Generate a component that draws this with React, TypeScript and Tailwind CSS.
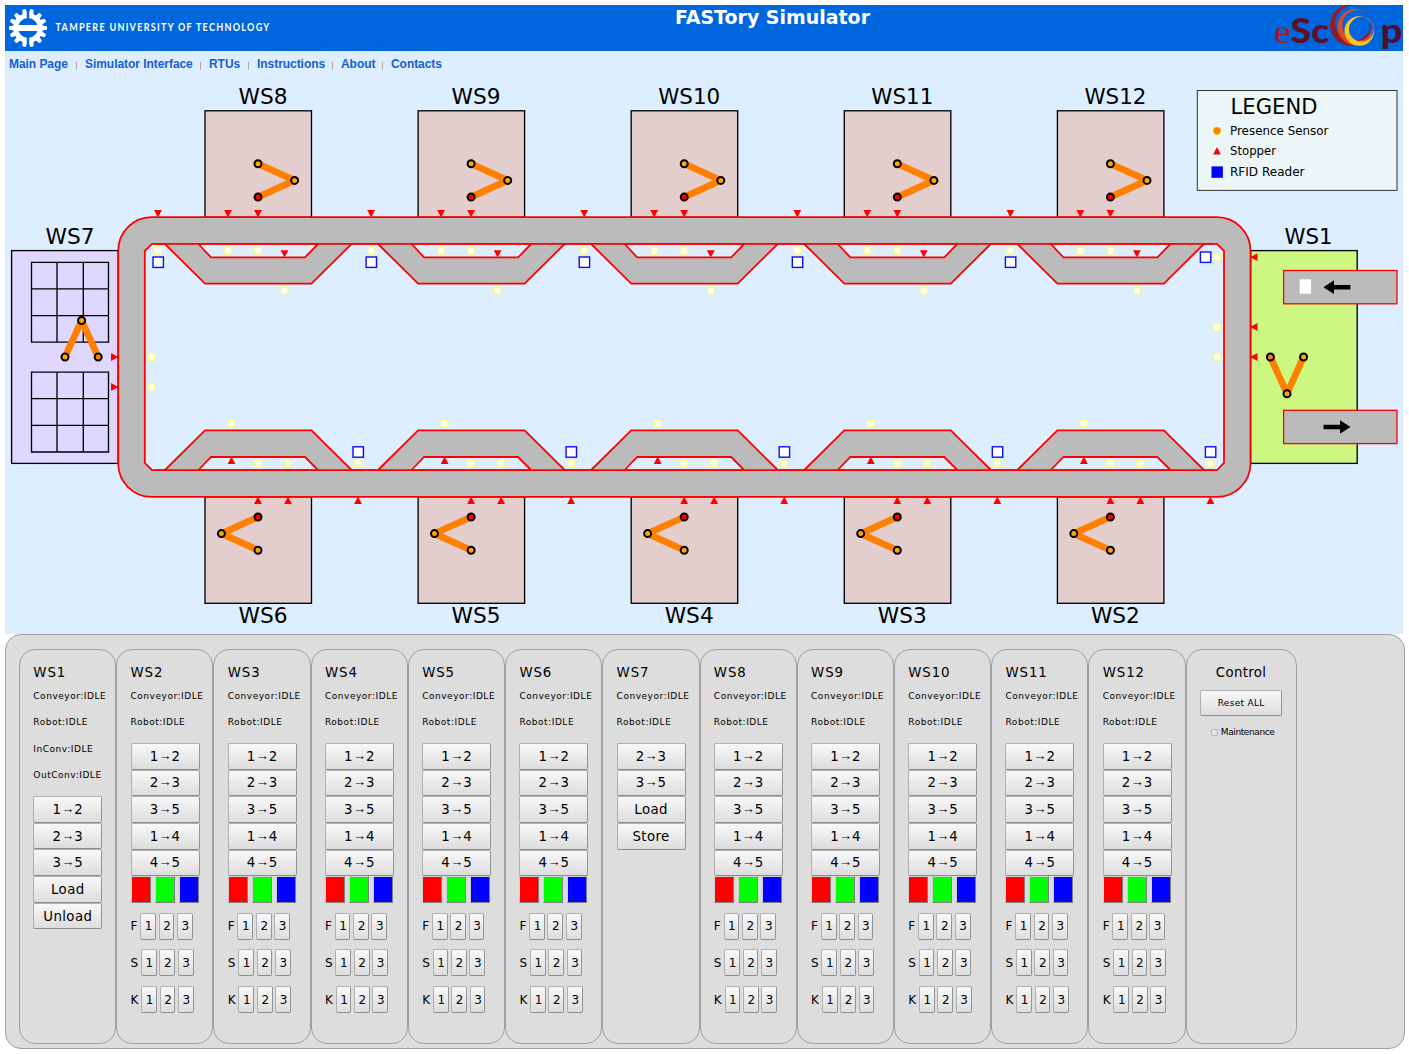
import React from "react";

const NAV = ["Main Page", "Simulator Interface", "RTUs", "Instructions", "About", "Contacts"];
const NAV_W = [60, 108, 32, 68, 34, 52];
const STEP = 213.1;

function Label({ x, y, w, size = 21.33, anchor = "middle", children }: { x: number; y: number; w: number; size?: number; anchor?: "start" | "middle"; children: string }) {
  return (
    <text x={x} y={y} fontSize={size} textAnchor={anchor} textLength={w} lengthAdjust="spacingAndGlyphs" fill="#000">
      {children}
    </text>
  );
}

function Sensor({ x, y }: { x: number; y: number }) {
  return <circle cx={x} cy={y} r="3.7" fill="#fff" stroke="#ffff66" strokeWidth="1.4" />;
}

function Reader({ x, y }: { x: number; y: number }) {
  return <rect x={x - 5} y={y - 5} width="10.4" height="10.4" fill="#fff" stroke="#0d0df5" strokeWidth="1.4" />;
}

function Stopper({ x, y, dir }: { x: number; y: number; dir: "up" | "down" | "left" | "right" }) {
  const angle = { up: 0, right: 90, down: 180, left: 270 }[dir];
  return <path d="M0 -3.9L3.9 3.5H-3.9Z" fill="#f00" transform={`translate(${x} ${y}) rotate(${angle})`} />;
}

function Robot({ points, fills }: { points: number[][]; fills: string[] }) {
  return (
    <g>
      <polyline points={points.map((p) => p.join(",")).join(" ")} fill="none" stroke="#ff8000" strokeWidth="6.7" strokeLinejoin="bevel" />
      {points.map((p, i) => (
        <circle key={i} cx={p[0]} cy={p[1]} r="3.5" fill={fills[i]} stroke="#000" strokeWidth="2" />
      ))}
    </g>
  );
}

function Grid({ y }: { y: number }) {
  return (
    <path
      d={`M31.5 ${y}H108.5V${y + 79.8}H31.5ZM57 ${y}V${y + 79.8}M83.3 ${y}V${y + 79.8}M31.5 ${y + 26.5}H108.5M31.5 ${y + 53.2}H108.5`}
      fill="none"
      stroke="#000"
      strokeWidth="1.33"
    />
  );
}

function TopStation({ i }: { i: number }) {
  return (
    <g transform={`translate(${i * STEP} 0)`}>
      <path d="M165 244L205 283.6H311.5L351.5 244H318L305 257.4H211L198 244Z" fill="#bbb" />
      <path d="M165 244L205 283.6H311.5L351.5 244M318 244L305 257.4H211L198.5 244" fill="none" stroke="#f00" strokeWidth="1.8" />
      {[158, 228, 258].map((x) => (
        <React.Fragment key={x}>
          <Stopper x={x} y={213.6} dir="down" />
          <Sensor x={x} y={250.6} />
        </React.Fragment>
      ))}
      <Stopper x={284.5} y={253.7} dir="down" />
      <Sensor x={284.5} y={290.5} />
      <Reader x={158} y={262} />
      <Robot points={[[258, 163.7], [294.6, 180.4], [258, 197.1]]} fills={["#ffa500", "#ffa500", "#f00"]} />
    </g>
  );
}

function BottomStation({ i }: { i: number }) {
  return (
    <g transform={`translate(${i * STEP} 0)`}>
      <path d="M165 470L205 430.3H311.5L351.5 470H318L305 457H211L198 470Z" fill="#bbb" />
      <path d="M165 470L205 430.3H311.5L351.5 470M318 470L305 457H211L198.5 470" fill="none" stroke="#f00" strokeWidth="1.8" />
      <Stopper x={231.5} y={460.4} dir="up" />
      <Sensor x={231.5} y={423.5} />
      {[258, 288, 358].map((x) => (
        <React.Fragment key={x}>
          <Stopper x={x} y={500.4} dir="up" />
          <Sensor x={x} y={463.6} />
        </React.Fragment>
      ))}
      <Reader x={358} y={451.8} />
      <Robot points={[[258, 517], [221.4, 533.6], [258, 550.2]]} fills={["#f00", "#ffa500", "#ffa500"]} />
    </g>
  );
}

function Plant() {
  return (
    <svg className="block" width="1398" height="583" viewBox="5 51 1398 583" fontFamily="'DejaVu Sans', Verdana, sans-serif">
      <rect x="11.6" y="250.6" width="106.6" height="212.8" fill="#dfd7ff" stroke="#000" strokeWidth="1.33" />
      <rect x="1250.6" y="250.6" width="106.6" height="212.8" fill="#ccf780" stroke="#000" strokeWidth="1.33" />
      {[0, 1, 2, 3, 4].map((i) => (
        <g key={i}>
          <rect x={205 + i * STEP} y="110.8" width="106.5" height="106.5" fill="#e3cdcd" stroke="#000" strokeWidth="1.33" />
          <rect x={205 + i * STEP} y="496.8" width="106.5" height="106.5" fill="#e3cdcd" stroke="#000" strokeWidth="1.33" />
          <Label x={263 + i * STEP} y={104} w={i < 2 ? 49 : 62}>{`WS${i + 8}`}</Label>
          <Label x={263 + i * STEP} y={623} w={49}>{`WS${6 - i}`}</Label>
        </g>
      ))}
      <Label x={70} y={244} w={49}>WS7</Label>
      <Label x={1308.5} y={244} w={48}>WS1</Label>
      <path
        fillRule="evenodd"
        d="M151.5 217.2H1217A33.5 33.5 0 0 1 1250.5 250.7V463.5A33.5 33.5 0 0 1 1217 496.9H151.5A33.5 33.5 0 0 1 118.2 463.5V250.7A33.5 33.5 0 0 1 151.5 217.2ZM152 243.9L144.8 250.9V463L152 470.2H1217L1224 463V250.9L1217 243.9Z"
        fill="#bbb"
        stroke="#f00"
        strokeWidth="1.8"
      />
      {[0, 1, 2, 3, 4].map((i) => <TopStation key={i} i={i} />)}
      {[0, 1, 2, 3, 4].map((i) => <BottomStation key={i} i={i} />)}
      <path d="M155 243.9H1214M155 470.2H1214" stroke="#f00" strokeWidth="1.8" />
      <Grid y={262.4} />
      <Grid y={372.2} />
      <Robot points={[[65, 357], [81.6, 320.5], [98.2, 357]]} fills={["#ffa500", "#ffa500", "#ff8000"]} />
      {[357, 387].map((y) => (
        <React.Fragment key={y}>
          <Stopper x={114.5} y={y} dir="right" />
          <Sensor x={151.6} y={y} />
        </React.Fragment>
      ))}
      {[257.2, 327, 357].map((y) => (
        <React.Fragment key={y}>
          <Stopper x={1254} y={y} dir="left" />
          <Sensor x={1217} y={y} />
        </React.Fragment>
      ))}
      <Reader x={1205.4} y={257} />
      <Robot points={[[1270.4, 357], [1287, 393.7], [1303.6, 357]]} fills={["#ff8000", "#ffa500", "#ffa500"]} />
      <rect x="1283.6" y="270.5" width="113.4" height="33.3" fill="#bbb" stroke="#f00" strokeWidth="1.3" />
      <rect x="1283.6" y="410.3" width="113.4" height="33.3" fill="#bbb" stroke="#f00" strokeWidth="1.3" />
      <rect x="1299.7" y="279.3" width="11.3" height="14.4" fill="#fff" />
      <path d="M1323.4 287.2L1334 280.3V285H1350.4V289.4H1334V294Z" />
      <path d="M1350.5 427L1340 420.2V424.8H1323.6V429.2H1340V433.8Z" />
      <rect x="1197.3" y="90.5" width="199.7" height="99.9" fill="#ecf6f7" stroke="#333" />
      <Label x={1230.5} y={113.7} w={87} anchor="start">LEGEND</Label>
      <Label x={1230} y={135} w={98.5} size={12} anchor="start">Presence Sensor</Label>
      <Label x={1230} y={155.3} w={46} size={12} anchor="start">Stopper</Label>
      <Label x={1230} y={176} w={74.5} size={12} anchor="start">RFID Reader</Label>
      <circle cx="1217" cy="130.8" r="3.7" fill="#ff8000" stroke="#ffc000" />
      <Stopper x={1217} y={151} dir="up" />
      <rect x="1211.5" y="166.4" width="11.4" height="11.4" fill="#00f" />
    </svg>
  );
}

function GearLogo() {
  return (
    <svg width="40" height="40" viewBox="-20 -20 40 40" className="shrink-0">
      {[12, 42, 66, 90, 114, 138, 168, 192, 222, 246, 270, 294, 318, 348].map((a) => (
        <path key={a} d="M-2.8 -13L-1.7 -19H1.7L2.8 -13Z" fill="#fff" transform={`rotate(${a})`} />
      ))}
      <circle r="12.3" fill="none" stroke="#fff" strokeWidth="4.8" />
      <rect x="-12" y="-3" width="24" height="6" fill="#fff" />
      <path d="M0 -20V-9.5M0 9.5V20" stroke="#0066dd" strokeWidth="2.4" />
    </svg>
  );
}

function EscopLogo() {
  return (
    <svg width="132" height="46" viewBox="1271 5 132 46" className="shrink-0">
      <text x="1274" y="42.5" fontSize="34" fontFamily="'Liberation Serif', serif" fill="#a01c24" textLength="17" lengthAdjust="spacingAndGlyphs">e</text>
      <text x="1290.5" y="42.5" fontSize="35" fontWeight="900" fontFamily="Lato, sans-serif" fill="#5f1028" textLength="39" lengthAdjust="spacingAndGlyphs">Sc</text>
      <text x="1380.5" y="42.5" fontSize="35" fontWeight="900" fontFamily="Lato, sans-serif" fill="#4f1030" textLength="22" lengthAdjust="spacingAndGlyphs">p</text>
      <path fillRule="evenodd" fill="#8f1c26" d="M1330 25a20.5 20.5 0 1 0 41 0a20.5 20.5 0 1 0 -41 0ZM1335.2 23.2a17.7 17.7 0 1 1 35.4 0a17.7 17.7 0 1 1 -35.4 0Z" />
      <path fillRule="evenodd" fill="#e04a26" d="M1337.5 27a18 18 0 1 0 36 0a18 18 0 1 0 -36 0ZM1342.2 25.4a15.4 15.4 0 1 1 30.8 0a15.4 15.4 0 1 1 -30.8 0Z" />
      <path fillRule="evenodd" fill="#ffc51e" d="M1344.5 31a14.8 14.8 0 1 0 29.6 0a14.8 14.8 0 1 0 -29.6 0ZM1349 29.2a12.4 12.4 0 1 1 24.8 0a12.4 12.4 0 1 1 -24.8 0Z" />
    </svg>
  );
}

const BTN = "flex shrink-0 items-center justify-center border border-[#b0b0b0] border-r-[#949494] border-b-[#8c8c8c] bg-linear-to-b from-[#f8f8f8] to-[#dddddd] rounded-[2px]";

function WideButton({ children }: { children: string }) {
  const [from, to] = children.split("→");
  return (
    <button className={`${BTN} h-[26.66px] w-[69px] pt-px text-[13.33px] leading-[20px] tracking-[0.4px]`}>
      {to ? (
        <>
          {from}
          <span className="pb-[2px] font-['Liberation_Sans',Arial,sans-serif] text-[13px] leading-[16px] tracking-normal">→</span>
          {to}
        </>
      ) : (
        children
      )}
    </button>
  );
}

function Digits({ name, className }: { name: string; className: string }) {
  return (
    <div className={`flex items-center text-[12px] ${className}`}>
      <span className="mr-[2.5px] tracking-[0.3px]">{name}</span>
      <div className="flex gap-[2.6px]">
        {["1", "2", "3"].map((d) => (
          <button key={d} className={`${BTN} h-[27px] w-[15.8px] pl-px text-[12px]`}>{d}</button>
        ))}
      </div>
    </div>
  );
}

const SWATCHES = ["bg-[#ff0000]", "bg-[#00ff00]", "bg-[#0000ff]"];

function Station({ n }: { n: number }) {
  const states = n === 1 ? ["Conveyor", "Robot", "InConv", "OutConv"] : ["Conveyor", "Robot"];
  const actions =
    n === 1 ? ["1→2", "2→3", "3→5", "Load", "Unload"] : n === 7 ? ["2→3", "3→5", "Load", "Store"] : ["1→2", "2→3", "3→5", "1→4", "4→5"];
  return (
    <section className="h-[395px] w-[97.23px] shrink-0 rounded-[16px] border border-[#a0a0a0] pt-[13px] pl-[13.3px]">
      <h2 className="h-[19px] text-[13.33px] leading-[20px] tracking-[0.9px]">{`WS${n}`}</h2>
      <div className="pt-[0.5px]">
        {states.map((s) => (
          <p key={s} className="h-[26.6px] text-[9px] leading-[26.6px] tracking-[0.53px] whitespace-nowrap">{s}:IDLE</p>
        ))}
      </div>
      <div className="mt-[7.2px]">
        {actions.map((a) => <WideButton key={a}>{a}</WideButton>)}
      </div>
      {n !== 1 && n !== 7 && (
        <>
          <div className="flex gap-[4px]">
            {SWATCHES.map((c) => (
              <button key={c} className={`h-[27px] w-[20px] border border-[#d0d0d0] border-r-[#808080] border-b-[#808080] ${c}`} />
            ))}
          </div>
          <Digits name="F" className="mt-[9.5px]" />
          <Digits name="S" className="mt-[9.5px]" />
          <Digits name="K" className="mt-[10px]" />
        </>
      )}
    </section>
  );
}

export default function App() {
  return (
    <div className="h-[1054px] w-[1409px] overflow-hidden bg-white px-[5px] pt-[5px] font-['DejaVu_Sans',Verdana,sans-serif] text-black">
      <header className="grid h-[46px] w-[1398px] grid-cols-[669px_200px_1fr] bg-[#0066dd]">
        <div className="flex items-center pl-[3px]">
          <GearLogo />
          <svg width="240" height="24" className="ml-[7px]">
            <text x="0.5" y="15.4" fontSize="11.5" letterSpacing="1.6" fontWeight="700" fill="#fff" fontFamily="Lato, sans-serif" textLength="215" lengthAdjust="spacingAndGlyphs">TAMPERE UNIVERSITY OF TECHNOLOGY</text>
          </svg>
        </div>
        <svg width="200" height="30">
          <text x="1" y="19" fontSize="18.67" fontWeight="700" fill="#fff" textLength="195" lengthAdjust="spacingAndGlyphs">FASTory Simulator</text>
        </svg>
        <div className="flex justify-end"><EscopLogo /></div>
      </header>
      <main className="relative h-[583px] w-[1398px] bg-[#dceeff]">
        <Plant />
        <nav className="absolute top-[3px] left-[4px] flex items-center font-['Liberation_Sans',Arial,sans-serif] text-[12px] leading-[20px] font-bold tracking-[-0.05px] text-[#1560d4]">
          {NAV.map((label, i) => (
            <React.Fragment key={label}>
              {i > 0 && <span className="flex w-[16px] justify-center"><span className="mt-[3px] mr-[2px] h-[8px] w-px bg-[#b5a890]" /></span>}
              <a style={{ width: NAV_W[i] }} className="whitespace-nowrap">{label}</a>
            </React.Fragment>
          ))}
        </nav>
      </main>
      <div className="flex h-[415px] w-[1400px] rounded-[16px] border border-[#a0a0a0] bg-[#dddddd] pt-[14px] pl-[13px]">
        {[1, 2, 3, 4, 5, 6, 7, 8, 9, 10, 11, 12].map((n) => <Station key={n} n={n} />)}
        <section className="flex h-[395px] w-[111px] shrink-0 flex-col items-center rounded-[16px] border border-[#a0a0a0] pt-[13px]">
          <h2 className="h-[19px] text-[13.33px] leading-[20px] tracking-[0.35px]">Control</h2>
          <button className={`${BTN} mt-[8px] h-[26px] w-[82px] pt-px text-[9px] tracking-[0.3px]`}>Reset ALL</button>
          <label className="mt-[10.5px] ml-[3px] flex h-[12px] items-center text-[9px] tracking-[-0.4px]">
            <span className="mr-[3px] block size-[7px] rounded-[2px] border border-[#b4b4b4] bg-[#e6e6e6]" />
            Maintenance
          </label>
        </section>
      </div>
    </div>
  );
}
